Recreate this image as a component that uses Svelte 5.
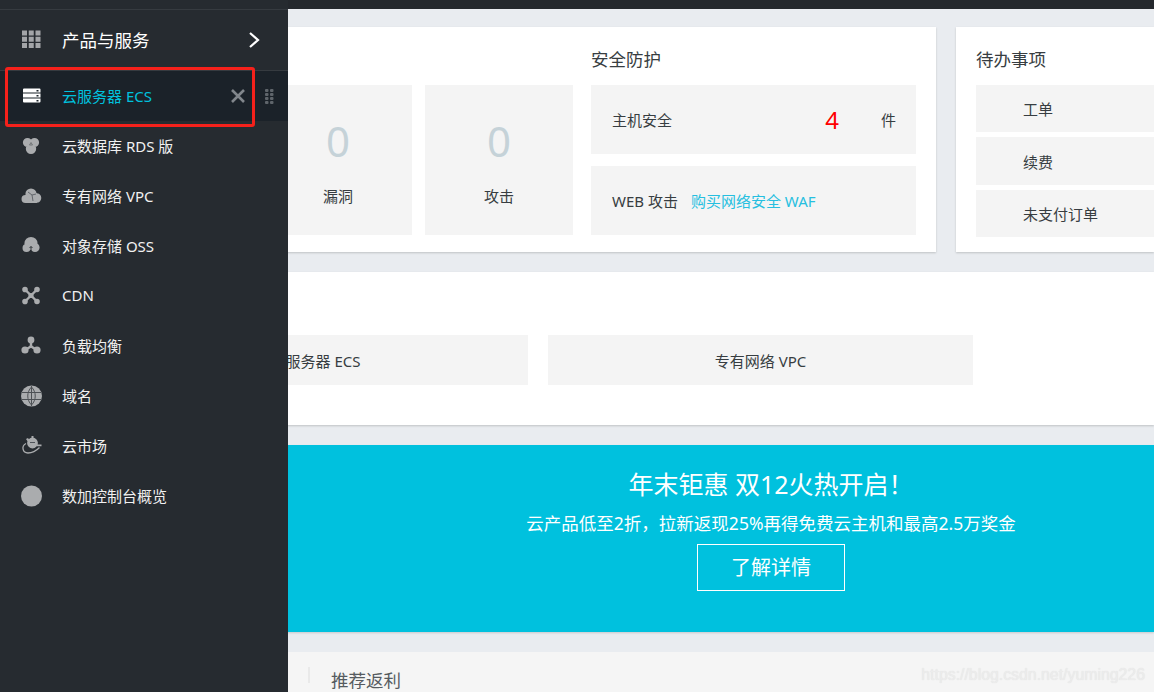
<script>
  const c = (x, y, r) => `M${x - r} ${y}a${r} ${r} 0 1 1 ${2 * r} 0a${r} ${r} 0 1 1 ${-2 * r} 0Z`;
  const icons = {
    rds: { solid: c(6.5, 6.5, 4.6) + c(13.5, 6.5, 4.6) + c(10, 12.8, 5.2) + 'M7 6h6v6H7z', cut: 'M10 6.500l1.500 2.500h-3z', tone: '#6c6f72', width: 0.9 },
    vpc: { solid: c(4.5, 13, 4) + c(10, 8, 5.6) + c(15.5, 12, 4.8) + 'M4 11h12v6H4z', cut: 'M7 6l4 3 1 6M11 9l4-1', tone: '#50545a', width: 0.8 },
    oss: { solid: c(10, 7.5, 6.6) + c(5.5, 12, 4) + c(14, 11.5, 4.6), cut: 'M10 16v-5.500M8.500 12l1.500-1.500 1.500 1.500', tone: '#262b30', width: 0.9 },
    cdn: { solid: c(4, 3.5, 2.8) + c(16, 3.5, 2.8) + c(4, 15.5, 2.8) + c(16, 15.5, 2.8) + c(10, 9.5, 2.6), line: 'M4 3.5l12 12M16 3.5l-12 12' },
    lb: { solid: c(10, 4, 3.4) + c(4, 14, 3.6) + c(16, 14, 3.6) + c(10, 10.5, 1.6), line: 'M10 4v6.5M4 14l6-3.5 6 3.5' },
    globe: { solid: c(10.5, 10, 10.5), cut: 'M1 6.500h19M1 13.500h19M10.500 0v20M10.500 1c-5 5-5 13 0 18M10.500 1c5 5 5 13 0 18', tone: '#4d5155', width: 1 },
    market: { solid: c(11.5, 7, 5.4) + 'M10.500 0h2v3h-2zM16 8.500h4.500v1.800h-4.500zM5 3l2-1 2 3-2 1z', line: 'M5 7.500C0 10 1.500 17 7 17c4.500 0 8-2 11.500-5.500', thin: true, cut: 'M9 6.500h5', tone: '#50545a', width: 1 },
    dot: { solid: c(10.5, 10, 10.5) }
  };
  const nav = [
    ['云数据库 RDS 版', 'rds'],
    ['专有网络 VPC', 'vpc'],
    ['对象存储 OSS', 'oss'],
    ['CDN', 'cdn'],
    ['负载均衡', 'lb'],
    ['域名', 'globe'],
    ['云市场', 'market'],
    ['数加控制台概览', 'dot']
  ];
  const grid = [0, 1, 2].flatMap((y) => [0, 1, 2].map((x) => [x * 6.75 + 0.5, y * 6.25 + 0.5]));
</script>

<div class="page">
  <div class="main">
    <div class="topbar"></div>
    <div class="content">
      <div class="row-one">
        <section class="card overview">
          <h3 class="sec-head">安全防护</h3>
          <div class="stats">
            <div class="stat"><span class="num">0</span><span class="lab">漏洞</span></div>
            <div class="stat"><span class="num">0</span><span class="lab">攻击</span></div>
          </div>
          <div class="sec">
            <div class="sec-tile">
              <span class="grow">主机安全</span>
              <span class="count">4</span>
              <span class="unit">件</span>
            </div>
            <div class="sec-tile">
              <span>WEB 攻击</span>
              <a class="link" href="#waf">购买网络安全 WAF</a>
            </div>
          </div>
        </section>
        <section class="card todo">
          <h3>待办事项</h3>
          <div class="todo-list">
            <div class="todo-item first">工单</div>
            <div class="todo-item mid">续费</div>
            <div class="todo-item">未支付订单</div>
          </div>
        </section>
      </div>

      <section class="shortcuts">
        <div class="shortcut">云服务器 ECS</div>
        <div class="shortcut">专有网络 VPC</div>
      </section>

      <section class="banner">
        <div class="banner-title">年末钜惠 双12火热开启！</div>
        <div class="banner-sub">云产品低至2折，拉新返现25%再得免费云主机和最高2.5万奖金</div>
        <a class="banner-btn" href="#more">了解详情</a>
      </section>

      <section class="bottom">
        <span class="divider"></span>
        <span class="bottom-title">推荐返利</span>
      </section>
    </div>
  </div>

  <aside class="sidebar">
    <div class="side-head">
      <svg class="icon" viewBox="0 0 20 20" width="21" height="20">
        {#each grid as [x, y]}
          <rect {x} {y} width="5" height="5" fill="#a3a5a8" />
        {/each}
      </svg>
      <span class="side-title">产品与服务</span>
      <svg class="chevron" viewBox="0 0 12 18" width="12" height="18">
        <path d="M2 2l8 7-8 7" fill="none" stroke="#fff" stroke-width="2.2" />
      </svg>
    </div>

    <div class="nav-item active">
      <svg class="icon" viewBox="0 0 21 20" width="21" height="20">
        <path d="M3 2.500h15.500a1 1 0 0 1 1 1v3h-17.500v-3a1 1 0 0 1 1-1zM2 7.500h17.500v4h-17.500zM2 12.500h17.500v3a1 1 0 0 1-1 1h-15.500a1 1 0 0 1-1-1z" fill="#fff" />
        <rect x="15.500" y="4" width="2" height="1.500" fill="#1b2229" />
        <rect x="15.500" y="9" width="2" height="1.500" fill="#1b2229" />
        <rect x="15.500" y="14" width="2" height="1.500" fill="#1b2229" />
      </svg>
      <span class="nav-text">云服务器 ECS</span>
      <svg class="close" viewBox="0 0 14 14" width="14" height="14">
        <path d="M1 1l12 12M13 1L1 13" stroke="#81868b" stroke-width="2.6" fill="none" />
      </svg>
      <svg class="drag" viewBox="0 0 9 15" width="9" height="15">
        {#each [0, 4, 8, 12] as y}
          <rect x="0" {y} width="3.500" height="3" rx="1" fill="#5f656b" />
          <rect x="5" {y} width="3.500" height="3" rx="1" fill="#5f656b" />
        {/each}
      </svg>
    </div>

    {#each nav as [label, key]}
      <div class="nav-item">
        <svg class="icon" viewBox="0 0 21 20" width="21" height="20">
          <path d={icons[key].solid} fill="#aaacae" />
          {#if icons[key].line}
            <path d={icons[key].line} fill="none" stroke="#aaacae" stroke-width={icons[key].thin ? 1.3 : 2.4} />
          {/if}
          {#if icons[key].cut}
            <path d={icons[key].cut} fill="none" stroke={icons[key].tone} stroke-width={icons[key].width} />
          {/if}
        </svg>
        <span class="nav-text">{label}</span>
      </div>
    {/each}
  </aside>

  <div class="annotation"></div>
  <div class="watermark">https://blog.csdn.net/yuming226</div>
</div>

<style>
  :global(body) {
    margin: 0;
  }
  .page {
    position: relative;
    width: 1154px;
    height: 692px;
    overflow: hidden;
    background: #e9ecf0;
    color: #373d41;
    font-family: "Noto Sans", "Noto Sans CJK SC", sans-serif;
    font-size: 15px;
  }
  .main {
    display: flex;
    flex-direction: column;
    height: 100%;
  }
  .topbar {
    height: 9px;
    flex: none;
    background: #24282d;
  }
  .content {
    flex: 1;
    min-height: 0;
    display: flex;
    flex-direction: column;
    gap: 20px;
    padding: 18px 0 0 20px;
  }
  .row-one {
    display: flex;
    gap: 20px;
    height: 225px;
    flex: none;
  }
  .card {
    background: #fff;
    box-shadow: 0 1px 2px rgba(0, 0, 0, 0.18);
    box-sizing: border-box;
  }
  h3 {
    margin: 0 0 12px;
    font-size: 17.500px;
    font-weight: 400;
    line-height: 28px;
    color: #373d41;
  }
  .overview {
    width: 916px;
    padding: 18px 20px 0;
    display: grid;
    grid-template-columns: 1fr 325px;
    grid-template-rows: 40px 150px;
    column-gap: 18px;
  }
  .sec-head {
    grid-column: 2;
    grid-row: 1;
  }
  .stats {
    grid-column: 1;
    grid-row: 2;
    display: flex;
    justify-content: flex-end;
    gap: 13px;
  }
  .stat {
    width: 148px;
    background: #f4f4f4;
    box-sizing: border-box;
    padding-top: 28px;
    display: flex;
    flex-direction: column;
    align-items: center;
  }
  .num {
    font-size: 42px;
    line-height: 56px;
    color: #c5d2d8;
  }
  .lab {
    line-height: 54px;
  }
  .sec {
    grid-column: 2;
    grid-row: 2;
    display: flex;
    flex-direction: column;
    gap: 12px;
  }
  .sec-tile {
    flex: 1;
    background: #f4f4f4;
    display: flex;
    align-items: center;
    gap: 13px;
    padding: 0 20px 0 21px;
  }
  .grow {
    flex: 1;
  }
  .count {
    font-size: 24px;
    color: #f00;
    line-height: 1;
    margin-right: 29px;
    margin-left: 1px;
  }
  .link {
    color: #26bfe0;
    text-decoration: none;
  }
  .todo {
    flex: 1;
    padding: 18px 0 0 20px;
  }
  .todo-list {
    display: flex;
    flex-direction: column;
    gap: 5px;
  }
  .todo-item {
    height: 47px;
    line-height: 48px;
    padding-left: 47px;
    background: #f4f4f4;
  }
  .todo-item.mid {
    height: 48px;
    line-height: 50px;
  }
  .shortcuts {
    flex: none;
    height: 153px;
    box-sizing: border-box;
    padding: 63px 0 0 83px;
    display: flex;
    gap: 20px;
    align-items: flex-start;
    background: #fff;
    box-shadow: 0 1px 2px rgba(0, 0, 0, 0.18);
  }
  .shortcut {
    width: 425px;
    height: 50px;
    line-height: 52px;
    text-align: center;
    background: #f4f4f4;
  }
  .banner {
    flex: none;
    height: 187px;
    box-sizing: border-box;
    padding: 21px 0 0 368px;
    display: flex;
    flex-direction: column;
    align-items: center;
    background: #00c1de;
    color: #fff;
    box-shadow: 0 1px 2px rgba(0, 0, 0, 0.15);
  }
  .banner-title {
    font-size: 25px;
    line-height: 36px;
  }
  .banner-sub {
    margin-top: 6px;
    font-size: 17.500px;
    line-height: 30px;
  }
  .banner-btn {
    margin-top: 6px;
    width: 148px;
    height: 47px;
    box-sizing: border-box;
    border: 1px solid #fff;
    color: #fff;
    font-size: 20px;
    line-height: 45px;
    text-align: center;
    text-decoration: none;
  }
  .bottom {
    flex: 1;
    min-height: 40px;
    background: #f5f5f5;
    display: flex;
    align-items: center;
    padding-left: 288px;
    gap: 21px;
  }
  .divider {
    width: 2px;
    height: 16px;
    margin-top: 6px;
    background: #e9e9e9;
  }
  .bottom-title {
    font-size: 17.500px;
    line-height: 28px;
    color: #555b60;
    margin-top: 16px;
  }
  .sidebar {
    position: absolute;
    left: 0;
    top: 0;
    width: 288px;
    height: 692px;
    box-sizing: border-box;
    padding-top: 9px;
    background: #262b30;
    color: #f1f1f1;
  }
  .side-head {
    height: 60px;
    border-top: 1px solid #363b40;
    border-bottom: 1px solid #363b40;
    display: flex;
    align-items: center;
    padding-left: 21px;
    gap: 20px;
  }
  .side-title {
    font-size: 17.500px;
    color: #fff;
    flex: 1;
    margin-top: -2px;
  }
  .chevron {
    margin-right: 28px;
  }
  .icon {
    flex: none;
    overflow: visible;
  }
  .nav-item {
    height: 50px;
    display: flex;
    align-items: center;
    gap: 20px;
    padding-left: 21px;
    font-size: 15px;
  }
  .nav-text {
    flex: 1;
    margin-top: -2px;
  }
  .active {
    background: #1b2229;
    color: #00c1de;
  }
  .close {
    margin-right: 1px;
  }
  .drag {
    margin-left: -1px;
    margin-right: 14px;
  }
  .annotation {
    position: absolute;
    left: 5px;
    top: 67px;
    width: 250px;
    height: 60px;
    box-sizing: border-box;
    border: 3px solid #f5211b;
    border-radius: 3px;
  }
  .watermark {
    position: absolute;
    right: 9px;
    top: 665px;
    font-family: "Liberation Sans", sans-serif;
    font-size: 15.850px;
    line-height: 20px;
    color: #ececec;
    text-shadow: 0 0 1px #dedede;
  }
</style>
